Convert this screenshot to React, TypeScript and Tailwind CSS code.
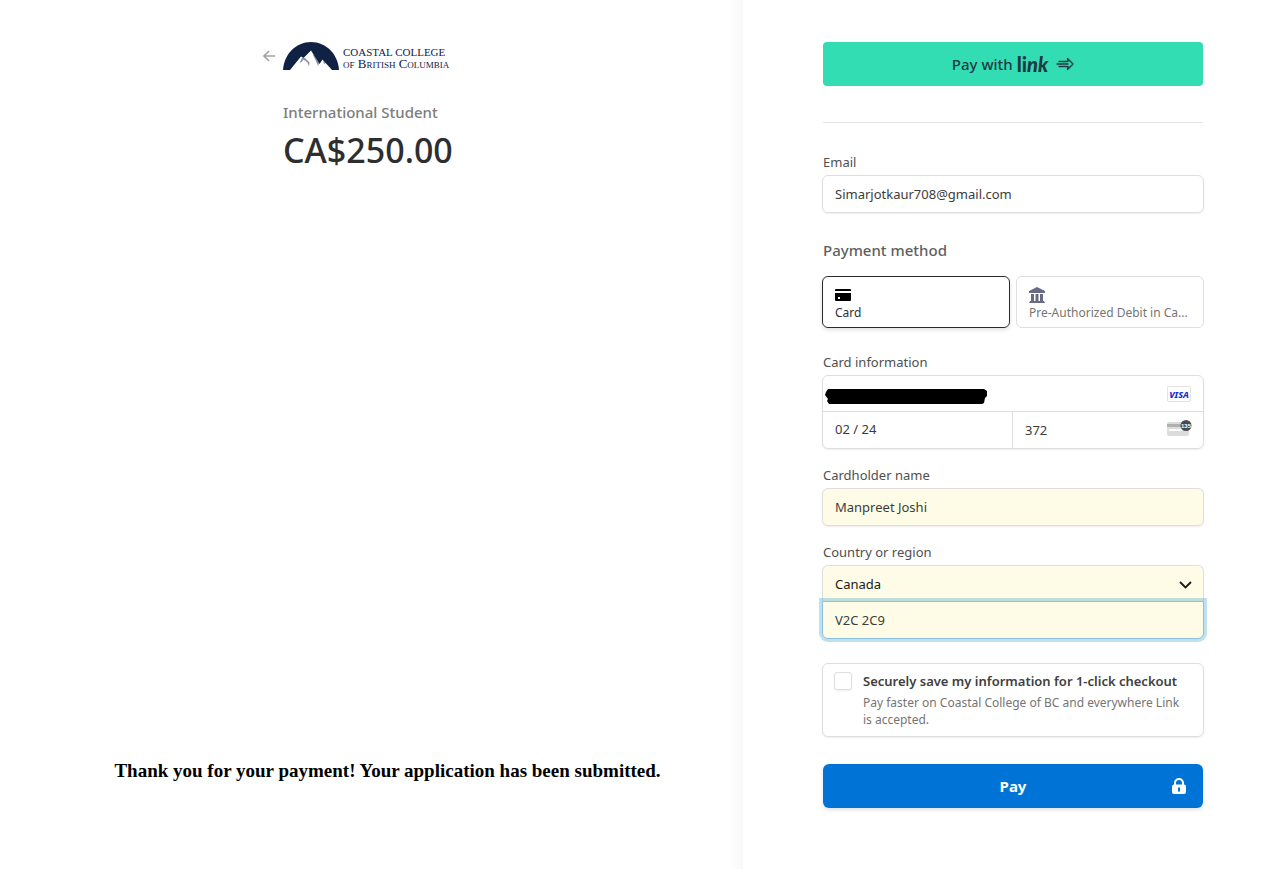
import React from "react";

const fieldShadow = "shadow-[0_1px_2px_rgba(0,0,0,0.07)]";
const labelClass = "mb-[3px] block h-5 pl-px text-[13px] leading-5 text-[#4f4f4f]";
const fieldClass =
  "block h-[38px] w-full rounded-md border border-[#dedede] px-3 text-[13px] text-[#3c3c3c] outline-none";

function CollegeLogo() {
  return (
    <div className="flex items-center gap-1 text-[#0f2244]">
      <svg width="56" height="30" viewBox="0 0 56 30" aria-hidden="true">
        <path d="M0 29C1 13 13 1 28 1S55 13 56 29Z" fill="#0f2244" />
        <path d="M7 29 18 15.500l2.500 1.500L28 9.500l6 9.500 2.500 4 3-4.500L49 29Z" fill="#fff" />
        <path d="m19 17-2.500 5 2-1 2-2.500 4 3 1.500 4 .5-4-4.500-4.500ZM30 14l3 6 2 5 1-3-2-3-3-5ZM40 19l1 4 2-1Z" fill="#0f2244" opacity="0.5" />
      </svg>
      <div className="pt-1 font-['Liberation_Serif',serif] leading-[11px] whitespace-nowrap">
        <div className="text-[11px]">COASTAL COLLEGE</div>
        <div className="text-[13px] [font-variant:small-caps]">of British Columbia</div>
      </div>
    </div>
  );
}

function CardIcon() {
  return (
    <svg width="16" height="16" viewBox="0 0 16 16" aria-hidden="true">
      <path d="M1 2h14a1 1 0 0 1 1 1v1H0V3a1 1 0 0 1 1-1Z" fill="#000" />
      <path d="M0 6h16v7a1 1 0 0 1-1 1H1a1 1 0 0 1-1-1Zm3 4v2h2v-2Z" fill="#000" fillRule="evenodd" />
    </svg>
  );
}

function BankIcon() {
  return (
    <svg width="16" height="16" viewBox="0 0 16 16" fill="#6a6a86" aria-hidden="true">
      <path d="M8 0 16 4v2H0V4ZM2 7h3v7H2ZM6.500 7h3v7h-3ZM11 7h3v7h-3ZM1 14h14l1 2H0Z" />
    </svg>
  );
}

function CvcIcon() {
  return (
    <svg className="absolute top-2 right-[11px]" width="25" height="18" viewBox="0 0 25 18" aria-hidden="true">
      <rect x="0" y="2" width="22" height="14" rx="2" fill="#dcdcdc" />
      <rect x="0" y="4" width="22" height="3" fill="#b0b0b0" />
      <rect x="2" y="9" width="13" height="2" fill="#fff" />
      <circle cx="19" cy="5.500" r="5.500" fill="#4a4a4a" />
      <text x="19" y="8" textAnchor="middle" fontSize="6" fontWeight="600" fill="#fff" fontFamily="Liberation Sans, sans-serif">
        135
      </text>
    </svg>
  );
}

function Summary() {
  return (
    <section className="flex min-w-0 flex-col pt-10 pb-[86px] shadow-[inset_-18px_0_16px_-16px_rgba(0,0,0,0.05)]">
      <div className="ml-auto w-[480px] max-w-full">
        <header className="flex h-8 items-center gap-2">
          <a href="#back" aria-label="Back">
            <svg width="12" height="12" viewBox="0 0 12 12" fill="none" stroke="#a3a3a3" strokeWidth="1.600" aria-hidden="true">
              <path d="M12 6H1M6 1 1 6l5 5" />
            </svg>
          </a>
          <CollegeLogo />
        </header>
        <div className="pt-7 pl-5">
          <p className="text-[15px] leading-6 font-medium text-[#7d7d7d]">International Student</p>
          <h1 className="mt-1 text-[34px] leading-[44px] font-medium text-[#2e2e2e]">CA$250.00</h1>
        </div>
      </div>
      <p className="mt-auto pl-8 text-center font-['Liberation_Serif',serif] text-[19px] leading-6 font-bold text-black">
        Thank you for your payment! Your application has been submitted.
      </p>
    </section>
  );
}

export default function App() {
  return (
    <main className="grid min-h-screen grid-cols-[minmax(0,743fr)_minmax(0,520fr)] bg-white font-['Noto_Sans','Open_Sans',sans-serif]">
      <Summary />
      <section className="min-w-0 pt-[42px] pr-[59px] pb-[61px] pl-[79px]">
        <form onSubmit={(e) => e.preventDefault()}>
          <div className="px-px">
            <button
              type="button"
              className="flex h-11 w-full items-center justify-center rounded bg-[#33ddb3] text-[15px] font-medium text-[#1d3944]"
            >
              <span>Pay with</span>
              <span className="ml-1 flex items-baseline font-['Lato',sans-serif] text-[20px] leading-6 font-black">
                li<i>nk</i>
              </span>
              <svg className="ml-2" width="18" height="14" viewBox="0 0 18 14" fill="none" stroke="currentColor" strokeWidth="1.400" strokeLinejoin="round" strokeLinecap="round" aria-hidden="true">
                <path d="M3 4.500h9L11.500 1.500 17 7l-5.500 5.500.5-3H3M1 7h11" />
              </svg>
            </button>
            <hr className="mt-9 border-[#e6e6e6]" />
          </div>

          <div className="mt-[29px]">
            <label htmlFor="email" className={labelClass}>Email</label>
            <input id="email" type="email" defaultValue="Simarjotkaur708@gmail.com" className={`${fieldClass} ${fieldShadow}`} />
          </div>

          <h2 className="mt-[25px] pl-px text-[15px] leading-6 font-medium text-[#5f5f5f]">Payment method</h2>
          <div className="mt-[14px] grid grid-cols-2 gap-1.5">
            <button type="button" className="flex h-[52px] min-w-0 flex-col items-start rounded-md border border-[#2b2b2b] px-3 pt-2.5 text-left text-xs leading-5 text-[#303030] shadow-[0_2px_4px_rgba(0,0,0,0.12)]">
              <CardIcon />
              <span>Card</span>
            </button>
            <button type="button" className="flex h-[52px] min-w-0 flex-col items-start rounded-md border border-[#dedede] px-3 pt-2.5 text-left text-xs leading-5 text-[#757575]">
              <BankIcon />
              <span className="whitespace-nowrap">Pre-Authorized Debit in Ca...</span>
            </button>
          </div>

          <fieldset className="mt-6">
            <legend className={labelClass}>Card information</legend>
            <div className={`rounded-md border border-[#dedede] text-[13px] text-[#3c3c3c] ${fieldShadow}`}>
              <div className="relative">
                <input aria-label="Card number" className="block h-[35px] w-full rounded-t-md px-3 outline-none" />
                <svg className="absolute top-3 left-0.5" width="162" height="16" viewBox="0 0 162 16" aria-hidden="true">
                  <path d="M3 1h156l3 2v5l-2 2-1 5-2 1H4l-2-3 1-2-3-4 1-3Z" />
                </svg>
                <span className="absolute top-2.5 right-3 flex h-4 w-6 items-center justify-center rounded-[2px] border border-[#e2e2e2] text-[9px] leading-none font-extrabold text-[#1a2fc9] italic">
                  VISA
                </span>
              </div>
              <div className="grid h-[37px] grid-cols-2 border-t border-[#dedede]">
                <input aria-label="Expiry date" defaultValue="02 / 24" className="min-w-0 rounded-bl-md border-r border-[#dedede] px-3 outline-none" />
                <div className="relative">
                  <input aria-label="Security code" defaultValue="372" className="block h-full w-full rounded-br-md px-3 outline-none" />
                  <CvcIcon />
                </div>
              </div>
            </div>
          </fieldset>

          <div className="mt-4">
            <label htmlFor="name" className={labelClass}>Cardholder name</label>
            <input id="name" defaultValue="Manpreet Joshi" className={`${fieldClass} ${fieldShadow} bg-[#fefce6]`} />
          </div>

          <div className="mt-4">
            <label htmlFor="country" className={labelClass}>Country or region</label>
            <div className="relative">
              <select id="country" defaultValue="Canada" className="block h-9 w-full appearance-none rounded-t-md border border-b-0 border-[#dedede] bg-[#fefce6] px-3 pt-0.5 text-[13px] text-[#1a1a1a] outline-none">
                <option>Canada</option>
              </select>
              <svg className="absolute top-3.5 right-3" width="13" height="12" viewBox="0 0 13 12" fill="none" stroke="#1a1a1a" strokeWidth="1.800" aria-hidden="true">
                <path d="m1 3 5.500 5.500L12 3" />
              </svg>
            </div>
            <input
              aria-label="Postal code"
              defaultValue="V2C 2C9"
              className="relative block h-[38px] w-full rounded-b-md border border-[#8cc0e0] bg-[#fefce6] px-3 text-[13px] text-[#3c3c3c] shadow-[0_0_0_3px_rgba(0,130,200,0.25)] outline-none"
            />
          </div>

          <div className={`mt-6 flex min-h-[74px] gap-[11px] rounded-md border border-[#dedede] px-[11px] pt-[7px] pb-2 ${fieldShadow}`}>
            <input
              id="save"
              type="checkbox"
              className={`mt-px size-[18px] shrink-0 appearance-none rounded-[3px] border border-[#dedede] bg-white ${fieldShadow}`}
            />
            <label htmlFor="save" className="min-w-0">
              <span className="block text-[13px] leading-5 font-semibold text-[#404040]">Securely save my information for 1-click checkout</span>
              <span className="mt-[3px] block pr-2 text-xs leading-[17px] text-[#757575]">
                Pay faster on Coastal College of BC and everywhere Link is accepted.
              </span>
            </label>
          </div>

          <div className="mt-[27px] px-px">
            <button type="submit" className="relative h-11 w-full rounded-md bg-[#0074d6] text-[15px] font-bold text-white shadow-[0_2px_4px_rgba(0,0,0,0.12)]">
              Pay
              <svg className="absolute top-3.5 right-[17px]" width="14" height="16" viewBox="0 0 14 16" aria-hidden="true">
                <path d="M3 7V5a4 4 0 0 1 8 0v2" fill="none" stroke="#fff" strokeWidth="2" />
                <rect y="6.500" width="14" height="9.500" rx="2" fill="#fff" />
                <path d="M7 9.500v4" stroke="#0074d6" strokeWidth="2" />
              </svg>
            </button>
          </div>
        </form>
      </section>
    </main>
  );
}
